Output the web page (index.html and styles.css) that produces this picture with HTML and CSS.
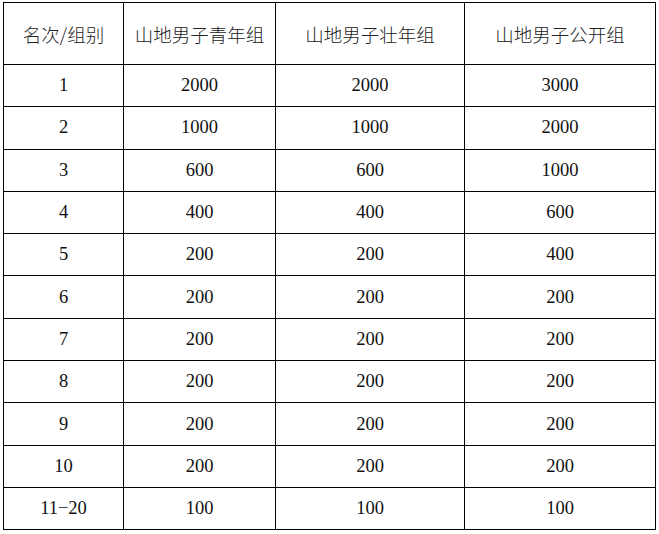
FILE: index.html
```html
<!DOCTYPE html>
<html lang="zh">
<head>
<meta charset="utf-8">
<link rel="stylesheet" href="styles.css">
</head>
<body>
<table class="prize">
  <colgroup>
    <col class="c1"><col class="c2"><col class="c3"><col class="c4">
  </colgroup>
  <thead>
    <tr><th>名次/组别</th><th>山地男子青年组</th><th>山地男子壮年组</th><th>山地男子公开组</th></tr>
  </thead>
  <tbody>
    <tr><td>1</td><td>2000</td><td>2000</td><td>3000</td></tr>
    <tr><td>2</td><td>1000</td><td>1000</td><td>2000</td></tr>
    <tr><td>3</td><td>600</td><td>600</td><td>1000</td></tr>
    <tr><td>4</td><td>400</td><td>400</td><td>600</td></tr>
    <tr><td>5</td><td>200</td><td>200</td><td>400</td></tr>
    <tr><td>6</td><td>200</td><td>200</td><td>200</td></tr>
    <tr><td>7</td><td>200</td><td>200</td><td>200</td></tr>
    <tr><td>8</td><td>200</td><td>200</td><td>200</td></tr>
    <tr><td>9</td><td>200</td><td>200</td><td>200</td></tr>
    <tr><td>10</td><td>200</td><td>200</td><td>200</td></tr>
    <tr><td>11−20</td><td>100</td><td>100</td><td>100</td></tr>
  </tbody>
</table>
</body>
</html>
```
FILE: styles.css
```css
html, body {
  margin: 0;
  padding: 0;
  background: #fff;
}
body {
  padding: 2px 0 0 3px;
}
.prize {
  border-collapse: collapse;
  table-layout: fixed;
  width: 652px;
  font-family: "Liberation Serif", "Noto Sans CJK SC", serif;
  font-size: 18.5px;
  color: #111;
}
.c1 { width: 120px; }
.c2 { width: 152px; }
.c3 { width: 189px; }
.c4 { width: 191px; }
.prize th, .prize td {
  border: 1px solid #000;
  text-align: center;
  vertical-align: middle;
  padding: 0;
  font-weight: normal;
}
.prize th {
  height: 61px;
  font-family: "Noto Sans CJK SC", sans-serif;
  font-size: 18.5px;
  font-weight: 300;
  color: #222;
}
.prize td {
  height: 41.3px;
}
```
